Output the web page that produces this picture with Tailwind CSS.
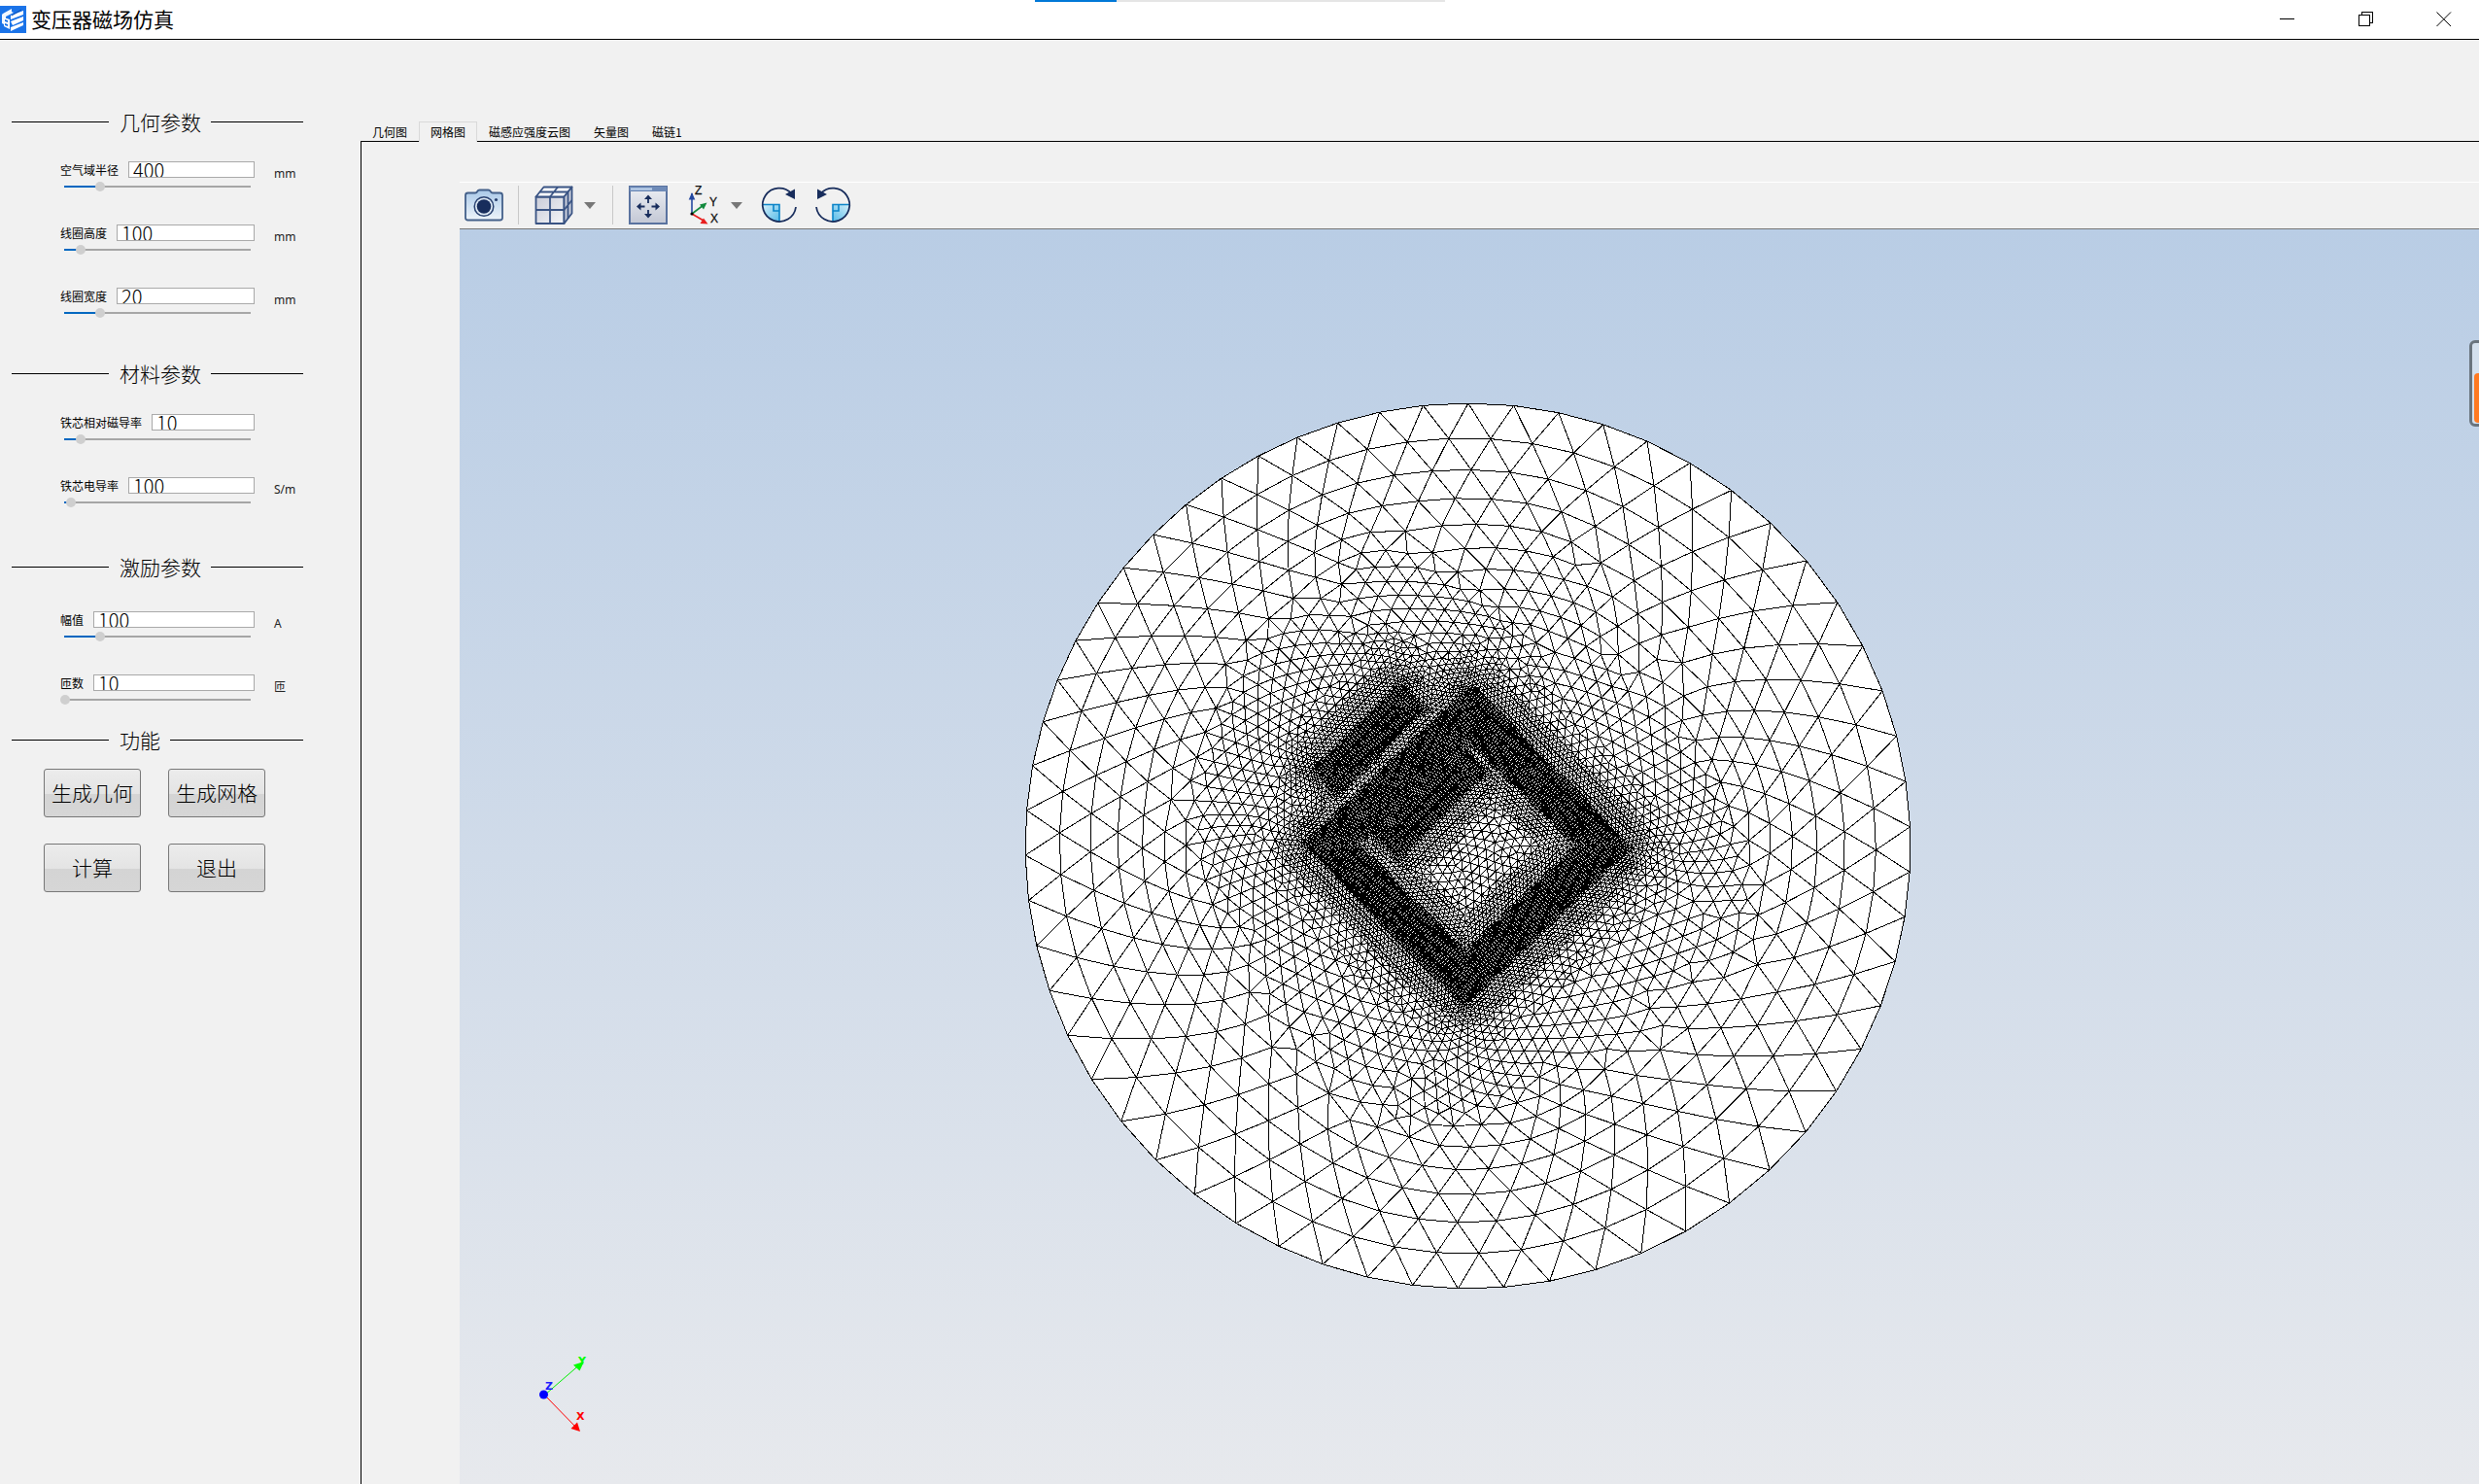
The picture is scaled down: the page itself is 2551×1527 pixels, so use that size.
<!DOCTYPE html>
<html lang="zh-CN">
<head>
<meta charset="utf-8">
<title>变压器磁场仿真</title>
<script src="https://cdn.jsdelivr.net/npm/@tailwindcss/browser@4"></script>
</head>
<body class="flex min-h-screen flex-col overflow-x-hidden bg-[#f1f1f1] font-['Noto_Sans_CJK_SC',sans-serif] text-black">

<header class="relative flex h-[41px] shrink-0 items-center border-b border-black bg-white">
  <svg class="h-7 w-[27px] shrink-0" viewBox="0 0 27 28" aria-hidden="true">
    <rect width="27" height="28" fill="#1a73e8"/>
    <path d="M3 8 12 3v3l2 1-8 4v9l-4-2V9z" fill="#fff" opacity=".95"/>
    <path d="M4 12l6 2v10l-6-3z" fill="#fff"/>
    <path d="M5 14l3 1v2l-3-1zM5 18l3 1v2l-3-1z" fill="#1a73e8"/>
    <path d="M11 10 24 5v4l-13 5zM11 16l13-5v4l-11 5zM11 22l13-5v3l-13 6z" fill="#fff"/>
    <path d="M12 10l10-6" stroke="#0b4fb3" stroke-width="1"/>
  </svg>
  <h1 class="ml-[5px] pb-[2px] text-[21px] leading-7">变压器磁场仿真</h1>
  <div class="absolute top-0 left-1/2 flex h-[2px] w-[422px] -translate-x-1/2 bg-[#e5e5e5]" role="progressbar" aria-valuenow="20" aria-valuemin="0" aria-valuemax="100" aria-label="进度">
    <div class="w-1/5 bg-[#0078d7]"></div>
  </div>
  <div class="ml-auto flex h-full">
    <button type="button" aria-label="最小化" class="flex w-[81px] items-center justify-center">
      <svg class="h-4 w-4" viewBox="0 0 16 16" shape-rendering="crispEdges"><path d="M0 7.500h15" stroke="#000"/></svg>
    </button>
    <button type="button" aria-label="还原" class="flex w-[81px] items-center justify-center">
      <svg class="h-4 w-4" viewBox="0 0 16 16" fill="none" stroke="#000" shape-rendering="crispEdges"><path d="M.5 3.500h11v11H.5zM3.500 3V.5h11v11H12"/></svg>
    </button>
    <button type="button" aria-label="关闭" class="flex w-[76px] items-center justify-center pl-1">
      <svg class="h-4 w-4" viewBox="0 0 16 16" stroke="#000"><path d="M.5.5l14.500 14.500M15 .5.5 15"/></svg>
    </button>
  </div>
</header>

<div class="flex flex-1">
  <aside class="w-[371px] shrink-0 pt-[70px] pl-3">
    <form class="w-[300px]" onsubmit="return false">
      <h2 class="flex h-7 items-center text-[21px] leading-7 font-light before:mr-[11px] before:h-px before:w-[100px] before:bg-black after:ml-[10px] after:h-px after:flex-1 after:bg-black">几何参数</h2>
      <div class="mt-[27px] flex flex-col gap-[37px]" data-fields="radius:空气域半径:400:mm:37,height:线圈高度:100:mm:17,width:线圈宽度:20:mm:37"></div>

      <h2 class="mt-[46px] flex h-7 items-center text-[21px] leading-7 font-light before:mr-[11px] before:h-px before:w-[100px] before:bg-black after:ml-[10px] after:h-px after:flex-1 after:bg-black">材料参数</h2>
      <div class="mt-7 flex flex-col gap-[37px]" data-fields="mu:铁芯相对磁导率:10::17,sigma:铁芯电导率:100:S/m:7"></div>

      <h2 class="mt-[50px] flex h-7 items-center text-[21px] leading-7 font-light before:mr-[11px] before:h-px before:w-[100px] before:bg-black after:ml-[10px] after:h-px after:flex-1 after:bg-black">激励参数</h2>
      <div class="mt-8 flex flex-col gap-[37px]" data-fields="amp:幅值:100:A:37,turns:匝数:10:匝:0"></div>

      <h2 class="mt-[25px] flex h-7 items-center text-[21px] leading-7 font-light before:mr-[11px] before:h-px before:w-[100px] before:bg-black after:ml-[10px] after:h-px after:flex-1 after:bg-black">功能</h2>
      <div class="mt-4 ml-[33px] grid w-[228px] grid-cols-[100px_100px] justify-between gap-y-[27px] text-[21px] leading-7 font-light">
        <button type="button" class="h-[50px] rounded-[3px] border border-[#777] bg-[linear-gradient(#ececec,#e4e4e4_51%,#d4d4d4_52%,#d6d6d6)] pb-[2px]">生成几何</button>
        <button type="button" class="h-[50px] rounded-[3px] border border-[#777] bg-[linear-gradient(#ececec,#e4e4e4_51%,#d4d4d4_52%,#d6d6d6)] pb-[2px]">生成网格</button>
        <button type="button" class="h-[50px] rounded-[3px] border border-[#777] bg-[linear-gradient(#ececec,#e4e4e4_51%,#d4d4d4_52%,#d6d6d6)] pb-[2px]">计算</button>
        <button type="button" class="h-[50px] rounded-[3px] border border-[#777] bg-[linear-gradient(#ececec,#e4e4e4_51%,#d4d4d4_52%,#d6d6d6)] pb-[2px]">退出</button>
      </div>
    </form>
  </aside>

  <main class="flex min-w-0 flex-1 flex-col pt-[84px]">
    <div role="tablist" class="z-10 flex h-[21px] text-xs leading-[18px]">
      <button type="button" role="tab" class="border-b border-black px-3 pt-px">几何图</button>
      <button type="button" role="tab" aria-selected="true" class="border border-b-0 border-[#d9d9d9] bg-[#f1f1f1] px-[11px]">网格图</button>
      <button type="button" role="tab" class="border-b border-black px-3 pt-px">磁感应强度云图</button>
      <button type="button" role="tab" class="border-b border-black px-3 pt-px">矢量图</button>
      <button type="button" role="tab" class="border-b border-black px-3 pt-px">磁链1</button>
      <div class="flex-1 border-b border-black"></div>
    </div>
    <section class="flex flex-1 flex-col border-l border-black pt-[41px] pl-[101px]">
      <div role="toolbar" class="flex h-[49px] shrink-0 items-center border-t border-b border-t-white border-b-[#787878] pb-[2px] pl-[5px]">
        <button type="button" aria-label="截图">
          <svg class="h-10 w-10" viewBox="0 0 40 40">
            <defs><linearGradient id="cam" x2="0" y2="1"><stop stop-color="#a9c8e8"/><stop offset="1" stop-color="#eef4fa"/></linearGradient></defs>
            <path d="M3.500 7.500H11q1.500 0 2.200-1.500T15.500 4.500h9q1.500 0 2.300 1.500T29 7.500h7.500q2.500 0 2.500 2.500v23q0 2.500-2.500 2.500h-33Q1 35.500 1 33V10q0-2.500 2.500-2.500z" fill="url(#cam)" stroke="#44608a" stroke-width="1.800"/>
            <circle cx="20" cy="21.500" r="9.800" fill="#dfeaf5" stroke="#28406f" stroke-width="1.500"/>
            <circle cx="20" cy="21.500" r="7.300" fill="#182d5c"/><circle cx="32.500" cy="14.500" r="1.600" fill="#28406f"/>
          </svg>
        </button>
        <div class="ml-[15px] h-10 w-px bg-[#c8c8c8]"></div>
        <button type="button" aria-label="显示模式" class="ml-4">
          <svg class="h-10 w-10" viewBox="0 0 40 40">
            <defs><linearGradient id="cube" x2="1" y2="1"><stop stop-color="#c9ccd8"/><stop offset="1" stop-color="#f4f5f8"/></linearGradient></defs>
            <g fill="url(#cube)" stroke="#3a5484" stroke-width="1.800" stroke-linejoin="round">
              <path d="M1.500 11.500h29V39h-29z"/><path d="M1.500 11.500 9.500 1.500H38.500l-8 10z" fill="#fafbfd"/><path d="M30.500 11.500l8-10v27L30.500 39z" fill="#c6cbd9"/>
              <path d="M16 39V11.500l8-10M1.500 25h29l8-10M5.500 6.500h29V34" fill="none"/>
            </g>
          </svg>
        </button>
        <button type="button" aria-label="更多显示模式" class="ml-[11px]"><svg class="h-10 w-3" viewBox="0 0 12 40"><path d="M0 17h12l-6 7z" fill="#777"/></svg></button>
        <div class="ml-[17px] h-10 w-px bg-[#c8c8c8]"></div>
        <button type="button" aria-label="适应窗口" class="ml-4">
          <svg class="h-10 w-10" viewBox="0 0 40 40">
            <defs><linearGradient id="fit" x2="0" y2="1"><stop stop-color="#eceef3"/><stop offset="1" stop-color="#c3c8d5"/></linearGradient></defs>
            <rect x="1" y="1" width="38" height="38" fill="url(#fit)" stroke="#5a73a0" stroke-width="2"/>
            <path d="M1 1h38v5H1z" fill="#6f8bb8"/><path d="M2 3.500h22" stroke="#c4d8f0" stroke-width="2"/>
            <g fill="#182d5c"><path d="M20 9.500l4 4.500h-8zM20 33.500l4-4.500h-8zM8 21.500l4.500-4v8zM32 21.500l-4.500-4v8z"/></g>
            <path d="M20 12v6M20 25v6M11 21.500h5.500M23.500 21.500h5.500" stroke="#182d5c" stroke-width="1.800"/>
          </svg>
        </button>
        <button type="button" aria-label="视图方向" class="ml-[15px]">
          <svg class="h-10 w-10" viewBox="0 0 40 40">
            <g stroke-width="1.600"><path d="M10 29V8" stroke="#2448a0"/><path d="M10 29l12-9" stroke="#11893c"/><path d="M10 29l12 7" stroke="#e81e1e"/></g>
            <path d="M10 7l3.300 7.500H6.700z" fill="#2448a0"/><path d="M25.500 17.500l-3.500 7-4-5z" fill="#11893c"/><path d="M26.500 39.500l-8-.5 3.500-5.500z" fill="#e81e1e"/><circle cx="10" cy="29" r="1.600"/>
            <g font-family="Liberation Sans" font-size="12" fill="#111" stroke="#111" stroke-width=".3"><text x="13" y="9">Z</text><text x="28" y="20.500">Y</text><text x="29" y="38">X</text></g>
          </svg>
        </button>
        <button type="button" aria-label="更多视图方向" class="ml-[10px]"><svg class="h-10 w-3" viewBox="0 0 12 40"><path d="M0 17h12l-6 7z" fill="#777"/></svg></button>
        <button type="button" aria-label="顺时针旋转" class="ml-[18px]">
          <svg class="h-10 w-10" viewBox="0 0 40 40">
            <defs><linearGradient id="rot" x2="1" y2="1"><stop stop-color="#d6effa"/><stop offset="1" stop-color="#55bbe8"/></linearGradient></defs>
            <path d="M2.500 19.500H20v17.500A17.500 17.500 0 0 1 2.500 19.500z" fill="url(#rot)"/><path d="M3 19.500h17V37M14 20v6h6" fill="none" stroke="#0a84c8" stroke-width="1.600"/>
            <path d="M37 22A17.200 17.200 0 1 1 32.500 8" fill="none" stroke="#182d5c" stroke-width="1.800"/><path d="M36 3.500V14L26 9z" fill="#182d5c"/>
          </svg>
        </button>
        <button type="button" aria-label="逆时针旋转" class="ml-[15px]">
          <svg class="h-10 w-10" viewBox="0 0 40 40">
            <g transform="matrix(-1 0 0 1 40 0)">
            <path d="M2.500 19.500H20v17.500A17.500 17.500 0 0 1 2.500 19.500z" fill="url(#rot)"/><path d="M3 19.500h17V37M14 20v6h6" fill="none" stroke="#0a84c8" stroke-width="1.600"/>
            <path d="M37 22A17.200 17.200 0 1 1 32.500 8" fill="none" stroke="#182d5c" stroke-width="1.800"/><path d="M36 3.500V14L26 9z" fill="#182d5c"/></g>
          </svg>
        </button>
      </div>
      <div class="relative flex-1 overflow-hidden bg-linear-to-b from-[#b9cde5] to-[#e7e9ed]">
        <svg class="absolute inset-0 h-full w-full" viewBox="0 0 2078 1291" preserveAspectRatio="xMidYMid meet" role="img" aria-label="有限元网格">
          <path id="domain" fill="#fff" stroke="#000" shape-rendering="crispEdges"/>
          <path id="mesh" fill="none" stroke="#000" stroke-width="1" shape-rendering="crispEdges"/>
          <g font-family="DejaVu Sans" font-weight="bold" font-size="11">
            <path d="M88 1199l38-33" stroke="#00f000"/><path d="M128 1165l-4.500 9.500-6.500-6z" fill="#0f0"/>
            <path d="M88 1200l34 35" stroke="#f00"/><path d="M124 1237l-9.500-3 6.500-6.500z" fill="#f00"/>
            <circle cx="86.500" cy="1199" r="4.500" fill="#00f"/>
            <text x="122" y="1168" fill="#0f0">Y</text><text x="88" y="1194" fill="#1a1aff">Z</text><text x="120" y="1225" fill="#f00">X</text>
          </g>
        </svg>
        <div class="absolute top-[114px] -right-5 h-[89px] w-[30px] rounded-md border-[3px] border-[#69747e] bg-[#d3e0ee] pt-[31px] pb-px pl-[2px]">
          <div class="h-full rounded-sm bg-[#ff7a22]"></div>
        </div>
      </div>
    </section>
  </main>
</div>

<script>
// Parameter rows: id:label:value:unit:filled length of the slider track
document.querySelectorAll('[data-fields]').forEach(box => {
  box.innerHTML = box.dataset.fields.split(',').map(f => {
    const [id, label, value, unit, fill] = f.split(':');
    return `<div class="flex h-7 pl-[50px]">
      <div class="w-[200px]">
        <div class="flex h-[17px] items-center gap-[10px]">
          <label for="${id}" class="text-xs leading-[17px]">${label}</label>
          <input id="${id}" value="${value}" class="h-[17px] min-w-0 flex-1 border border-[#a9a9a9] bg-white pt-[2px] pb-px pl-1 text-xl font-light">
        </div>
        <input type="range" aria-label="${label}" min="0" max="190" value="${fill > 0 ? +fill - 1 : 0}" style="--x:${+fill + 4}px" class="mt-1 block h-[10px] w-full appearance-none bg-[linear-gradient(90deg,transparent_4px,#0067c0_4px_var(--x),#a6a6a6_var(--x)_196px,transparent_196px)] bg-[length:100%_2px] bg-center bg-no-repeat [&::-webkit-slider-thumb]:h-[10px] [&::-webkit-slider-thumb]:w-[10px] [&::-webkit-slider-thumb]:appearance-none [&::-webkit-slider-thumb]:rounded-full [&::-webkit-slider-thumb]:bg-[#cfcfcf]">
      </div>
      <span class="mt-1 ml-5 font-['Noto_Sans','Noto_Sans_CJK_SC',sans-serif] text-xs leading-[18px] text-[#222]">${unit}</span>
    </div>`;
  }).join('');
});

// Adaptive triangular mesh of the air domain, the iron core and the two coils
(() => {
  const CX = 1037.500, CY = 634.500, R = 455.500, H0 = 2.600;
  const shapes = [
    [[1041,479],[1195,635],[1034,789],[879,633]],
    [[1041,519],[1160,634],[1034,754],[914,632]],
    [[888,556],[968,476],[984,492],[904,573]],
    [[951,622],[1031,542],[1047,558],[967,638]]
  ];
  const segs = shapes.flatMap(s => s.map((p, i) => [...p, ...s[(i + 1) % 4]]));
  const within = (s, x, y) => s.every(([a, b], i) => {
    const [c, d] = s[(i + 1) % 4];
    return (c - a) * (y - b) - (d - b) * (x - a) >= 0;
  });
  const dist = (x, y) => {
    let m = 1e9;
    for (const [a, b, c, d] of segs) {
      const u = c - a, v = d - b;
      const t = Math.max(0, Math.min(1, ((x - a) * u + (y - b) * v) / (u * u + v * v)));
      m = Math.min(m, Math.hypot(x - a - t * u, y - b - t * v));
    }
    // conductors and core keep the finest element size throughout
    if (m < 20 && (within(shapes[2], x, y) || within(shapes[3], x, y) || (within(shapes[0], x, y) && !within(shapes[1], x, y)))) return 0;
    return m;
  };
  const size = (x, y) => { const d = dist(x, y); return H0 + 0.155 * d * d / (d + 14); };
  const X = [], Y = [], A = [], H = [], CELL = 12, grid = new Map();
  const key = (x, y) => Math.floor(x / CELL) * 1000 + Math.floor(y / CELL);
  const add = (x, y, a) => {
    const i = X.length;
    X.push(x + Math.sin(i * 12.9) * 0.01); Y.push(y + Math.sin(i * 78.2) * 0.01); A.push(a); H.push(size(x, y));
    const k = key(x, y);
    grid.has(k) ? grid.get(k).push(i) : grid.set(k, [i]);
  };
  const free = (x, y, r) => {
    const n = Math.ceil(r / CELL), gx = Math.floor(x / CELL), gy = Math.floor(y / CELL);
    for (let i = gx - n; i <= gx + n; i++) for (let j = gy - n; j <= gy + n; j++)
      for (const q of grid.get(i * 1000 + j) || []) if (Math.hypot(X[q] - x, Y[q] - y) < r) return false;
    return true;
  };
  let th = -1.57;
  const ring = [];
  while (th < 4.713) { ring.push(th); th += size(CX + R * Math.cos(th), CY + R * Math.sin(th)) / R; }
  const stretch = 6.28318 / (th + 1.57);
  ring.forEach(t => { t = -1.57 + (t + 1.57) * stretch; add(CX + R * Math.cos(t), CY + R * Math.sin(t), t + Math.PI / 2); });
  const nRing = X.length;
  for (const [a, b, c, d] of segs) {
    const n = Math.round(Math.hypot(c - a, d - b) / H0), ang = Math.atan2(d - b, c - a);
    for (let i = 0; i < n; i++) add(a + (c - a) * i / n, b + (d - b) * i / n, ang);
  }
  const nFixed = X.length;
  for (let i = 0; i < X.length; i++) for (let k = 0; k < 6; k++) {
    const a = A[i] + k * Math.PI / 3;
    let h = H[i];
    h = (h + size(X[i] + h * Math.cos(a), Y[i] + h * Math.sin(a))) / 2;
    const x = X[i] + h * Math.cos(a), y = Y[i] + h * Math.sin(a), hs = size(x, y);
    if (Math.hypot(x - CX, y - CY) > R - hs * 0.6) continue;
    if (free(x, y, hs * 0.82)) add(x, y, A[i]);
  }

  const N = X.length;
  const order = [...Array(N).keys()].sort((p, q) => {
    const a = Math.floor(X[p] / 16), b = Math.floor(X[q] / 16);
    return a - b || (a % 2 ? Y[p] - Y[q] : Y[q] - Y[p]);
  });
  X.push(-1e5, 1e5, 0); Y.push(-1e5, -1e5, 1e5);
  const orient = (a, b, c) => (X[b] - X[a]) * (Y[c] - Y[a]) - (Y[b] - Y[a]) * (X[c] - X[a]);
  const inside = (t, p) => {
    const [a, b, c] = t.v, ax = X[a] - X[p], ay = Y[a] - Y[p], bx = X[b] - X[p], by = Y[b] - Y[p], cx = X[c] - X[p], cy = Y[c] - Y[p];
    return (ax * ax + ay * ay) * (bx * cy - cx * by) - (bx * bx + by * by) * (ax * cy - cx * ay) + (cx * cx + cy * cy) * (ax * by - bx * ay) > 0;
  };
  const triangulate = () => {
    let last = { v: [N, N + 1, N + 2], n: [null, null, null], dead: false };
    const all = [last];
    for (const p of order) {
      let t = last;
      for (let s = 0; s < 5000; s++) {
        let next = null;
        for (let k = 0; k < 3; k++) if (t.n[k] && orient(p, t.v[(k + 1) % 3], t.v[(k + 2) % 3]) < 0) { next = t.n[k]; break; }
        if (!next) break;
        t = next;
      }
      t.dead = true;
      const stack = [t], rim = [];
      while (stack.length) {
        const c = stack.pop();
        for (let k = 0; k < 3; k++) {
          const o = c.n[k];
          if (o && o.dead) continue;
          if (o && inside(o, p)) { o.dead = true; stack.push(o); }
          else rim.push([c.v[(k + 1) % 3], c.v[(k + 2) % 3], o]);
        }
      }
      const from = new Map(), to = new Map();
      for (const [a, b, o] of rim) {
        const f = { v: [p, a, b], n: [o, null, null], dead: false };
        if (o) o.n[o.v.findIndex(w => w !== a && w !== b)] = f;
        from.set(a, f); to.set(b, f); all.push(f); last = f;
      }
      for (const f of from.values()) { f.n[1] = from.get(f.v[2]); f.n[2] = to.get(f.v[1]); }
    }
    return all.filter(t => !t.dead && t.v.every(w => w < N)).map(t => t.v);
  };
  let tris;
  for (let pass = 0; pass < 4; pass++) {
    tris = triangulate();
    if (pass === 3) break;
    for (let it = 0; it < 2; it++) {
      const sx = new Float64Array(N), sy = new Float64Array(N), w = new Float64Array(N);
      for (const t of tris) for (let k = 0; k < 3; k++) {
        const a = t[k], b = t[(k + 1) % 3], c = t[(k + 2) % 3];
        sx[a] += X[b] + X[c]; sy[a] += Y[b] + Y[c]; w[a] += 2;
      }
      for (let i = nFixed; i < N; i++) if (w[i]) { X[i] = sx[i] / w[i]; Y[i] = sy[i] / w[i]; }
    }
  }
  const seen = new Set();
  let d = '';
  for (const t of tris) for (let k = 0; k < 3; k++) {
    const a = Math.min(t[k], t[(k + 1) % 3]), b = Math.max(t[k], t[(k + 1) % 3]), id = a * N + b;
    if (seen.has(id)) continue;
    seen.add(id);
    d += `M${X[a].toFixed(1)} ${Y[a].toFixed(1)}L${X[b].toFixed(1)} ${Y[b].toFixed(1)}`;
  }
  document.getElementById('mesh').setAttribute('d', d);
  document.getElementById('domain').setAttribute('d', 'M' + [...Array(nRing).keys()].map(i => X[i].toFixed(1) + ' ' + Y[i].toFixed(1)).join('L') + 'Z');
})();
</script>
</body>
</html>
